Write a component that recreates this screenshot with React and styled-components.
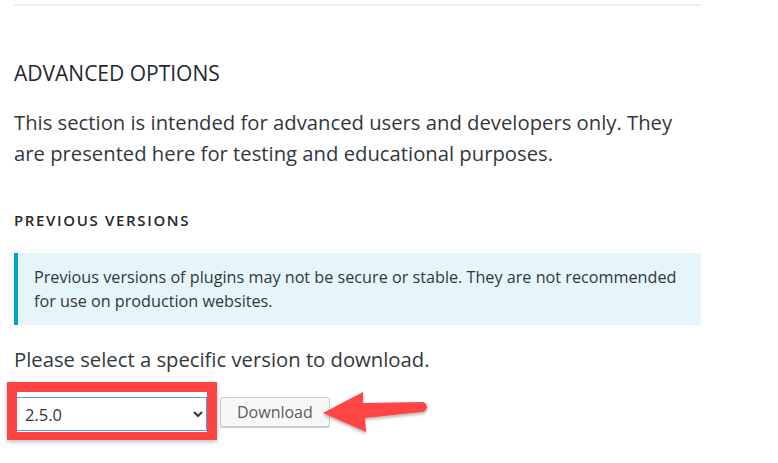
import React from "react";
import styled, { createGlobalStyle } from "styled-components";

const GlobalStyle = createGlobalStyle`
  body {
    margin: 0;
    background: #fff;
    font-family: "Open Sans", "Noto Sans", sans-serif;
    color: #32373c;
  }
`;

const Page = styled.div`
  width: 687px;
  padding: 4px 0 40px 14px;
`;

const Rule = styled.hr`
  margin: 0;
  border: 0;
  height: 2px;
  background: #eeeeee;
`;

const SectionTitle = styled.h2`
  margin: 53px 0 0;
  font-size: 21px;
  font-weight: 400;
  line-height: 28px;
  text-transform: uppercase;
  color: #23282d;
`;

const Text = styled.p`
  margin: ${(p) => p.$top || "0"} 0 0;
  font-size: 20.25px;
  line-height: 31px;
`;

const SubTitle = styled.h3`
  margin: 41px 0 0;
  font-size: 15px;
  font-weight: 600;
  letter-spacing: 0.11em;
  line-height: 20px;
  text-transform: uppercase;
  color: #23282d;
`;

const Notice = styled.div`
  margin-top: 23px;
  padding: 12px 20px 12px 16px;
  border-left: 4px solid #00a0d2;
  background: #e5f5fa;
  font-size: 16.2px;
  line-height: 24px;
`;

const Row = styled.div`
  position: relative;
  display: flex;
  align-items: flex-start;
  gap: 13px;
  margin-top: 22px;
  padding-left: 2px;
`;

const Select = styled.select`
  width: 191px;
  height: 34px;
  padding: 0 4px;
  border: 1px solid #5b9dd9;
  border-radius: 0;
  background: #fff;
  font-family: "Open Sans", sans-serif;
  font-size: 16.5px;
  color: #32373c;
`;

const Button = styled.button`
  height: 30px;
  padding: 0 16px;
  border: 1px solid #cccccc;
  border-radius: 3px;
  background: #f7f7f7;
  box-shadow: 0 1px 0 #cccccc;
  font-family: "Open Sans", sans-serif;
  font-size: 16px;
  color: #555d66;
  cursor: pointer;
`;

// red annotation frame around the select
const Highlight = styled.div`
  position: absolute;
  left: -7px;
  top: -15px;
  width: 210px;
  height: 58px;
  box-sizing: border-box;
  border-style: solid;
  border-color: #ff4444;
  border-width: 10px 10px 8px;
  box-shadow: 0 2px 4px rgba(0, 0, 0, 0.25);
  pointer-events: none;
`;

const Arrow = styled.svg`
  position: absolute;
  left: 300px;
  top: -10px;
  overflow: visible;
  pointer-events: none;
`;

function App() {
  return (
    <>
      <GlobalStyle />
      <Page>
        <Rule />
        <SectionTitle>Advanced Options</SectionTitle>
        <Text $top="20px">
          This section is intended for advanced users and developers only. They
          are presented here for testing and educational purposes.
        </Text>
        <SubTitle>Previous Versions</SubTitle>
        <Notice>
          Previous versions of plugins may not be secure or stable. They are not
          recommended for use on production websites.
        </Notice>
        <Text $top="19px">Please select a specific version to download.</Text>
        <Row>
          <Select defaultValue="2.5.0">
            <option>2.5.0</option>
          </Select>
          <Button>Download</Button>
          <Highlight />
          <Arrow width="116" height="50" viewBox="0 0 116 50">
            <defs>
              <filter id="sh" x="-20%" y="-20%" width="140%" height="160%">
                <feDropShadow dx="0" dy="2" stdDeviation="1.5" floodOpacity="0.3" />
              </filter>
            </defs>
            <path
              d="M9 26 L49 5 L49 16 L108 15 A5 5 0 0 1 108 25 L51 31 L52 45 Z"
              fill="#ff4444"
              filter="url(#sh)"
            />
          </Arrow>
        </Row>
      </Page>
    </>
  );
}

export default App;
